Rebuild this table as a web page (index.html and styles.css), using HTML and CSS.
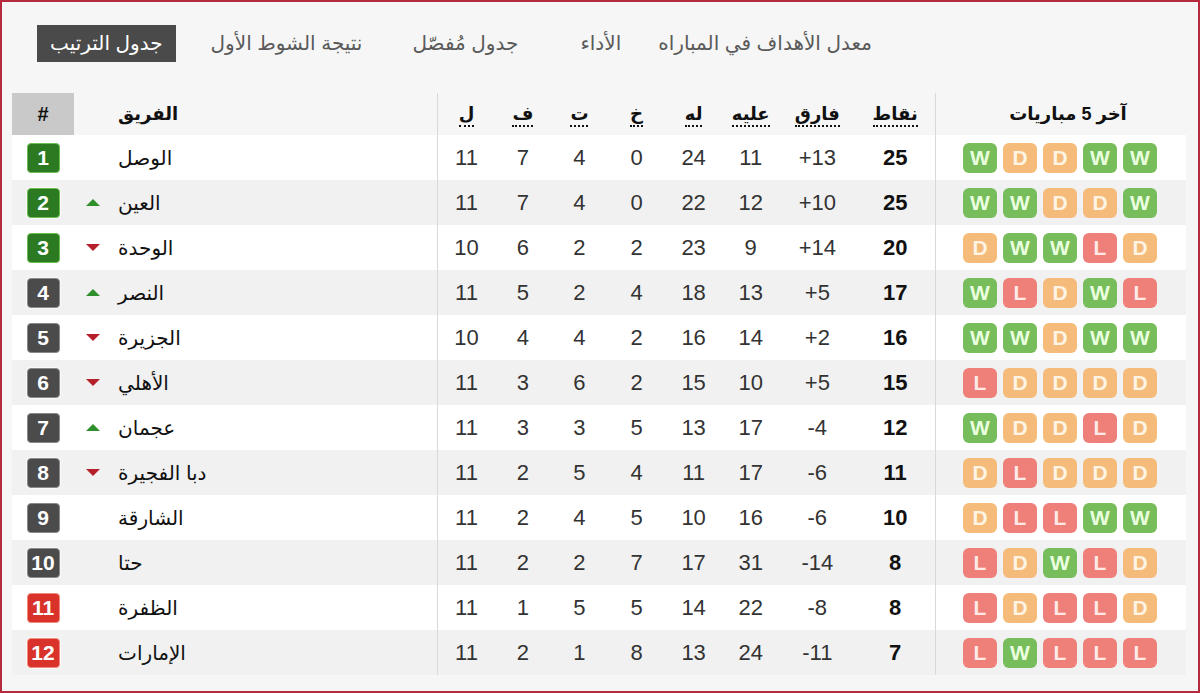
FILE: index.html
```html
<!DOCTYPE html>
<html lang="ar">
<head>
<meta charset="utf-8">
<title>جدول الترتيب</title>
<link rel="stylesheet" href="styles.css">
</head>
<body>
<div class="frame">
  <nav class="tabs">
    <span class="tab active">جدول الترتيب</span>
    <span class="tab t2">نتيجة الشوط الأول</span>
    <span class="tab t3">جدول مُفصّل</span>
    <span class="tab t4">الأداء</span>
    <span class="tab t5">معدل الأهداف في المباراه</span>
  </nav>
  <table class="standings">
    <colgroup>
      <col class="c-rank"><col class="c-team"><col class="c-n"><col class="c-n2"><col class="c-n"><col class="c-n"><col class="c-n"><col class="c-n"><col class="c-diff"><col class="c-pts"><col class="c-form">
    </colgroup>
    <thead>
      <tr>
        <th class="rank-h">#</th>
        <th class="team-h">الفريق</th>
        <th class="sep"><abbr>ل</abbr></th>
        <th><abbr>ف</abbr></th>
        <th><abbr>ت</abbr></th>
        <th><abbr>خ</abbr></th>
        <th><abbr>له</abbr></th>
        <th><abbr>عليه</abbr></th>
        <th><abbr>فارق</abbr></th>
        <th><abbr>نقاط</abbr></th>
        <th class="sep form-h">آخر 5 مباريات</th>
      </tr>
    </thead>
    <tbody>
      <tr><td><span class="badge g">1</span></td><td class="team"><span class="mv"></span><span class="name">الوصل</span></td><td class="sep">11</td><td>7</td><td>4</td><td>0</td><td>24</td><td>11</td><td>+13</td><td class="pts">25</td><td class="sep"><div class="form"><i class="w">W</i><i class="d">D</i><i class="d">D</i><i class="w">W</i><i class="w">W</i></div></td></tr>
      <tr><td><span class="badge g">2</span></td><td class="team"><span class="mv up"></span><span class="name">العين</span></td><td class="sep">11</td><td>7</td><td>4</td><td>0</td><td>22</td><td>12</td><td>+10</td><td class="pts">25</td><td class="sep"><div class="form"><i class="w">W</i><i class="w">W</i><i class="d">D</i><i class="d">D</i><i class="w">W</i></div></td></tr>
      <tr><td><span class="badge g">3</span></td><td class="team"><span class="mv down"></span><span class="name">الوحدة</span></td><td class="sep">10</td><td>6</td><td>2</td><td>2</td><td>23</td><td>9</td><td>+14</td><td class="pts">20</td><td class="sep"><div class="form"><i class="d">D</i><i class="w">W</i><i class="w">W</i><i class="l">L</i><i class="d">D</i></div></td></tr>
      <tr><td><span class="badge k">4</span></td><td class="team"><span class="mv up"></span><span class="name">النصر</span></td><td class="sep">11</td><td>5</td><td>2</td><td>4</td><td>18</td><td>13</td><td>+5</td><td class="pts">17</td><td class="sep"><div class="form"><i class="w">W</i><i class="l">L</i><i class="d">D</i><i class="w">W</i><i class="l">L</i></div></td></tr>
      <tr><td><span class="badge k">5</span></td><td class="team"><span class="mv down"></span><span class="name">الجزيرة</span></td><td class="sep">10</td><td>4</td><td>4</td><td>2</td><td>16</td><td>14</td><td>+2</td><td class="pts">16</td><td class="sep"><div class="form"><i class="w">W</i><i class="w">W</i><i class="d">D</i><i class="w">W</i><i class="w">W</i></div></td></tr>
      <tr><td><span class="badge k">6</span></td><td class="team"><span class="mv down"></span><span class="name">الأهلي</span></td><td class="sep">11</td><td>3</td><td>6</td><td>2</td><td>15</td><td>10</td><td>+5</td><td class="pts">15</td><td class="sep"><div class="form"><i class="l">L</i><i class="d">D</i><i class="d">D</i><i class="d">D</i><i class="d">D</i></div></td></tr>
      <tr><td><span class="badge k">7</span></td><td class="team"><span class="mv up"></span><span class="name">عجمان</span></td><td class="sep">11</td><td>3</td><td>3</td><td>5</td><td>13</td><td>17</td><td>-4</td><td class="pts">12</td><td class="sep"><div class="form"><i class="w">W</i><i class="d">D</i><i class="d">D</i><i class="l">L</i><i class="d">D</i></div></td></tr>
      <tr><td><span class="badge k">8</span></td><td class="team"><span class="mv down"></span><span class="name">دبا الفجيرة</span></td><td class="sep">11</td><td>2</td><td>5</td><td>4</td><td>11</td><td>17</td><td>-6</td><td class="pts">11</td><td class="sep"><div class="form"><i class="d">D</i><i class="l">L</i><i class="d">D</i><i class="d">D</i><i class="d">D</i></div></td></tr>
      <tr><td><span class="badge k">9</span></td><td class="team"><span class="mv"></span><span class="name">الشارقة</span></td><td class="sep">11</td><td>2</td><td>4</td><td>5</td><td>10</td><td>16</td><td>-6</td><td class="pts">10</td><td class="sep"><div class="form"><i class="d">D</i><i class="l">L</i><i class="l">L</i><i class="w">W</i><i class="w">W</i></div></td></tr>
      <tr><td><span class="badge k">10</span></td><td class="team"><span class="mv"></span><span class="name">حتا</span></td><td class="sep">11</td><td>2</td><td>2</td><td>7</td><td>17</td><td>31</td><td>-14</td><td class="pts">8</td><td class="sep"><div class="form"><i class="l">L</i><i class="d">D</i><i class="w">W</i><i class="l">L</i><i class="d">D</i></div></td></tr>
      <tr><td><span class="badge r">11</span></td><td class="team"><span class="mv"></span><span class="name">الظفرة</span></td><td class="sep">11</td><td>1</td><td>5</td><td>5</td><td>14</td><td>22</td><td>-8</td><td class="pts">8</td><td class="sep"><div class="form"><i class="l">L</i><i class="d">D</i><i class="l">L</i><i class="l">L</i><i class="d">D</i></div></td></tr>
      <tr><td><span class="badge r">12</span></td><td class="team"><span class="mv"></span><span class="name">الإمارات</span></td><td class="sep">11</td><td>2</td><td>1</td><td>8</td><td>13</td><td>24</td><td>-11</td><td class="pts">7</td><td class="sep"><div class="form"><i class="l">L</i><i class="w">W</i><i class="l">L</i><i class="l">L</i><i class="l">L</i></div></td></tr>
    </tbody>
  </table>
</div>
</body>
</html>
```
FILE: styles.css
```css
html, body {
  margin: 0;
  padding: 0;
}
body {
  width: 1200px;
  height: 693px;
  overflow: hidden;
  font-family: "Liberation Sans", "DejaVu Sans", sans-serif;
  color: #333;
}
.frame {
  box-sizing: border-box;
  width: 1200px;
  height: 693px;
  border: 2px solid #b52a3c;
  background: #f6f6f6;
  padding: 23px 0 0 10px;
}
.tabs {
  display: flex;
  align-items: center;
  height: 37px;
  padding-left: 25px;
  font-size: 20px;
  color: #5a5a5a;
}
.tab {
  white-space: nowrap;
  line-height: 37px;
}
.tab.active {
  background: #4a4a4a;
  color: #fff;
  padding: 0 13px;
}
.t2 { margin-left: 35px; }
.t3 { margin-left: 50px; }
.t4 { margin-left: 62px; }
.t5 { margin-left: 37px; }

.standings {
  margin-top: 31px;
  width: 1174px;
  border-collapse: collapse;
  table-layout: fixed;
}
.c-rank { width: 62px; }
.c-team { width: 363px; }
.c-n { width: 57px; }
.c-n2 { width: 56px; }
.c-diff { width: 76px; }
.c-pts { width: 80px; }
.c-form { width: 250px; }

.standings th {
  height: 42px;
  padding: 0;
  font-size: 18px;
  font-weight: bold;
  color: #111;
  text-align: center;
  vertical-align: middle;
}
.standings abbr {
  text-decoration: none;
  border-bottom: 2px dotted #111;
  padding-bottom: 1px;
}
.standings th.rank-h {
  background: #c9c9c9;
  font-size: 20px;
  font-family: "Liberation Sans", sans-serif;
}
.standings th.team-h {
  text-align: left;
  padding-left: 44px;
}
.standings th.form-h {
  padding-left: 14px;
}
.standings td {
  height: 45px;
  padding: 0;
  text-align: center;
  vertical-align: middle;
  font-size: 22px;
  color: #333;
}
.standings tbody tr:nth-child(odd) { background: #ffffff; }
.standings tbody tr:nth-child(even) { background: #f1f1f1; }
.standings .sep { border-left: 1px solid #d9d9d9; }
.standings td.pts {
  font-weight: bold;
  color: #111;
}
.badge {
  display: inline-block;
  width: 31px;
  height: 28px;
  line-height: 28px;
  border-radius: 4px;
  color: #fff;
  font-weight: bold;
  font-size: 21px;
  box-shadow: 0 0 0 1px rgba(255,255,255,0.6);
}
.badge.g { background: #2b7a22; border: 1px solid #6bbd4f; }
.badge.k { background: #4b4b4b; border: 1px solid #8a8a8a; }
.badge.r { background: #d8322a; border: 1px solid #f08a7a; }

.standings td.team {
  text-align: left;
  font-size: 20px;
  color: #111;
}
.team .mv {
  display: inline-block;
  width: 14px;
  height: 7px;
  margin-left: 12px;
  vertical-align: middle;
}
.team .mv.up {
  width: 0; height: 0;
  border-left: 7px solid transparent;
  border-right: 7px solid transparent;
  border-bottom: 7px solid #2f8f2a;
}
.team .mv.down {
  width: 0; height: 0;
  border-left: 7px solid transparent;
  border-right: 7px solid transparent;
  border-top: 7px solid #b5202a;
}
.team .name {
  margin-left: 18px;
  vertical-align: middle;
}
.form {
  display: flex;
  justify-content: center;
  gap: 6px;
  padding-right: 2px;
}
.form i {
  display: block;
  width: 34px;
  height: 30px;
  line-height: 30px;
  border-radius: 6px;
  font-style: normal;
  font-weight: bold;
  font-size: 21px;
  text-align: center;
}
.form i.w { background: #77bd5c; color: #eaffdf; }
.form i.d { background: #f4bb7b; color: #fff4e4; }
.form i.l { background: #ee7f79; color: #ffe9e6; }
```
